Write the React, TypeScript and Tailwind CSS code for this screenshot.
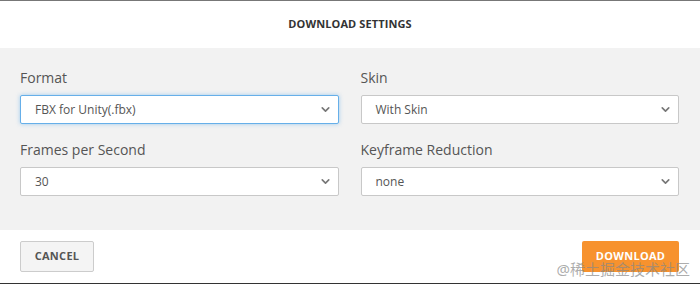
import { ChevronDown } from "lucide-react";

const Field = ({ label, value, focused }: { label: string; value: string; focused?: boolean }) => {
  return (
    <div className="flex flex-col">
      <label className="h-5 text-[14px] leading-5 text-[#555]">{label}</label>
      <div
        className={
          "mt-[7px] flex h-[29px] items-center justify-between rounded-[2px] border bg-white pl-[14px] pr-[6px] " +
          (focused ? "border-[#66afe9] shadow-[0_0_4px_rgba(102,175,233,0.6)]" : "border-[#c8c8c8]")
        }
      >
        <span className="text-[12px] text-[#555]">{value}</span>
        <ChevronDown className="h-[13px] w-[13px] text-[#777]" strokeWidth={3} />
      </div>
    </div>
  );
};

export default function App() {
  return (
    <div
      className="relative flex h-[284px] w-[700px] flex-col overflow-hidden border-t border-[#777] bg-white"
      style={{ fontFamily: '"Open Sans", "Noto Sans", sans-serif' }}
    >
      <div className="flex h-[47px] items-center justify-center">
        <h2 className="text-[11px] font-bold tracking-[0.1px] text-[#333]">DOWNLOAD SETTINGS</h2>
      </div>

      <div className="grid h-[182px] grid-cols-2 content-start gap-x-[22px] gap-y-4 bg-[#f2f2f2] pl-5 pr-[21px] pt-5">
        <Field label="Format" value="FBX for Unity(.fbx)" focused />
        <Field label="Skin" value="With Skin" />
        <Field label="Frames per Second" value="30" />
        <Field label="Keyframe Reduction" value="none" />
      </div>

      <div className="flex flex-1 items-start justify-between pl-5 pr-[21px] pt-[11px]">
        <button className="h-[31px] w-[74px] rounded-[2px] border border-[#ccc] bg-[#f4f4f4] text-[11px] font-bold tracking-[0.3px] text-[#555]">
          CANCEL
        </button>
        <button className="h-[31px] w-[97px] rounded-[2px] bg-[#f7922e] text-[11px] font-bold tracking-[0.3px] text-white">
          DOWNLOAD
        </button>
      </div>

      <div className="h-px bg-[#333]" />

      <span
        className="absolute bottom-[7px] right-[10px] text-[15px] leading-none text-[#888]/70"
        style={{ fontFamily: '"Noto Sans", "Noto Sans CJK SC", sans-serif' }}
      >
        @稀土掘金技术社区
      </span>
    </div>
  );
}
